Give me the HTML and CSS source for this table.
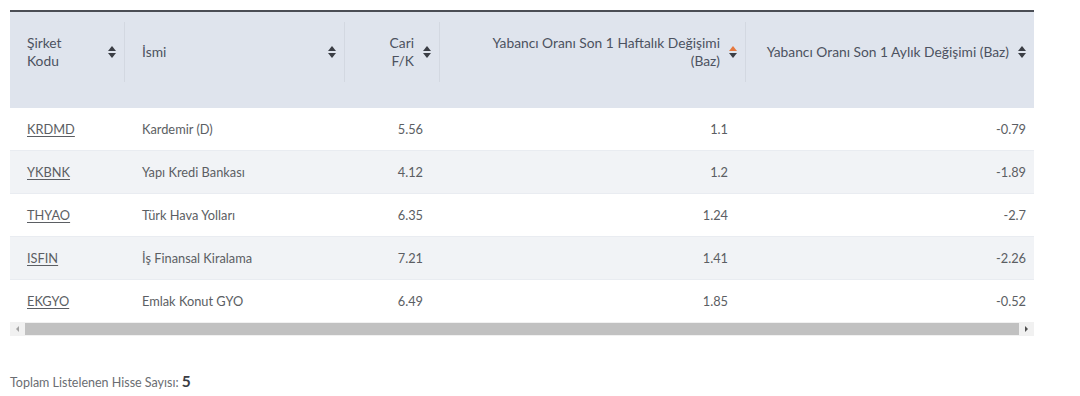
FILE: index.html
```html
<!DOCTYPE html>
<html lang="tr">
<head>
<meta charset="utf-8">
<link rel="stylesheet" href="styles.css">
</head>
<body>
<div class="wrap">
  <table class="grid">
    <colgroup>
      <col class="c1"><col class="c2"><col class="c3"><col class="c4"><col class="c5">
    </colgroup>
    <thead>
      <tr>
        <th><div class="hc left"><span class="ht">Şirket<br>Kodu</span><span class="sort"><i class="up"></i><i class="dn"></i></span></div></th>
        <th><div class="hc left"><span class="ht">İsmi</span><span class="sort"><i class="up"></i><i class="dn"></i></span></div></th>
        <th><div class="hc right"><span class="ht">Cari<br>F/K</span><span class="sort"><i class="up"></i><i class="dn"></i></span></div></th>
        <th><div class="hc right"><span class="ht">Yabancı Oranı Son 1 Haftalık Değişimi<br>(Baz)</span><span class="sort active"><i class="up"></i><i class="dn"></i></span></div></th>
        <th><div class="hc right last"><span class="ht">Yabancı Oranı Son 1 Aylık Değişimi (Baz)</span><span class="sort"><i class="up"></i><i class="dn"></i></span></div></th>
      </tr>
    </thead>
    <tbody>
      <tr><td><a href="#">KRDMD</a></td><td>Kardemir (D)</td><td class="num">5.56</td><td class="num n4">1.1</td><td class="num n5">-0.79</td></tr>
      <tr class="alt"><td><a href="#">YKBNK</a></td><td>Yapı Kredi Bankası</td><td class="num">4.12</td><td class="num n4">1.2</td><td class="num n5">-1.89</td></tr>
      <tr><td><a href="#">THYAO</a></td><td>Türk Hava Yolları</td><td class="num">6.35</td><td class="num n4">1.24</td><td class="num n5">-2.7</td></tr>
      <tr class="alt"><td><a href="#">ISFIN</a></td><td>İş Finansal Kiralama</td><td class="num">7.21</td><td class="num n4">1.41</td><td class="num n5">-2.26</td></tr>
      <tr><td><a href="#">EKGYO</a></td><td>Emlak Konut GYO</td><td class="num">6.49</td><td class="num n4">1.85</td><td class="num n5">-0.52</td></tr>
    </tbody>
  </table>
  <div class="scrollbar">
    <span class="sb-btn"><i class="sb-l"></i></span>
    <span class="sb-thumb"></span>
    <span class="sb-btn"><i class="sb-r"></i></span>
  </div>
  <p class="total">Toplam Listelenen Hisse Sayısı: <b>5</b></p>
</div>
</body>
</html>
```
FILE: styles.css
```css
html, body {
  margin: 0;
  padding: 0;
  background: #fff;
}
body {
  font-family: Lato, "Open Sans", sans-serif;
  color: #5b5e63;
}
.wrap {
  padding: 10px 0 0 10px;
  width: 1024px;
}
.grid {
  width: 1024px;
  border-collapse: collapse;
  table-layout: fixed;
  border-top: 2px solid #4b4e55;
}
.c1 { width: 115px; }
.c2 { width: 220px; }
.c3 { width: 95px; }
.c4 { width: 306px; }
.c5 { width: 288px; }

thead th {
  background: #dfe4ed;
  padding: 10px 0 26px 0;
  height: 60px;
  font-weight: 400;
  font-size: 13.8px;
  color: #4c5260;
  vertical-align: top;
}
.hc {
  height: 60px;
  display: flex;
  align-items: center;
  border-right: 1px solid #d3d8e1;
  line-height: 18px;
}
.hc.last { border-right: none; }
.hc.left { padding: 0 8px 0 17px; justify-content: space-between; text-align: left; }
.hc.right { padding: 0 8px 0 6px; justify-content: flex-end; text-align: right; }
.hc.right .ht { margin-right: 8px; }
.sort {
  display: flex;
  flex-direction: column;
  align-items: center;
  gap: 2px;
  width: 9px;
  flex: none;
}
.sort i {
  display: block;
  width: 0;
  height: 0;
  border-left: 4.5px solid transparent;
  border-right: 4.5px solid transparent;
}
.sort .up { border-bottom: 5px solid #3b3e45; }
.sort .dn { border-top: 5px solid #3b3e45; }
.sort.active .up { border-bottom-color: #e6793f; }

tbody td {
  height: 42px;
  padding: 0 0 0 17px;
  font-size: 12.8px;
  color: #5b5e63;
  border-bottom: 1px solid #e9ecf1;
  white-space: nowrap;
}
tbody tr:last-child td { border-bottom: none; }
tbody tr.alt td { background: #f1f3f6; }
tbody td.num {
  text-align: right;
  padding: 0 17px 0 0;
}
tbody td.n4 { padding-right: 18px; }
tbody td.n5 { padding-right: 8px; }
tbody a {
  color: #5b5e63;
  text-decoration: underline;
  text-underline-offset: 2px;
}

.scrollbar {
  display: flex;
  height: 14px;
  background: #f1f1f1;
  align-items: stretch;
}
.sb-btn {
  width: 15px;
  display: flex;
  align-items: center;
  justify-content: center;
}
.sb-thumb {
  flex: 1;
  background: #c1c1c1;
  margin: 1px 0;
}
.sb-l, .sb-r {
  display: block;
  width: 0;
  height: 0;
  border-top: 3px solid transparent;
  border-bottom: 3px solid transparent;
}
.sb-l { border-right: 3px solid #a3a3a3; }
.sb-r { border-left: 3px solid #505050; }

.total {
  margin: 36px 0 0 0;
  font-size: 12.5px;
  color: #6a6d72;
}
.total b {
  font-size: 15.5px;
  font-weight: 700;
  color: #3a3d44;
}
```
